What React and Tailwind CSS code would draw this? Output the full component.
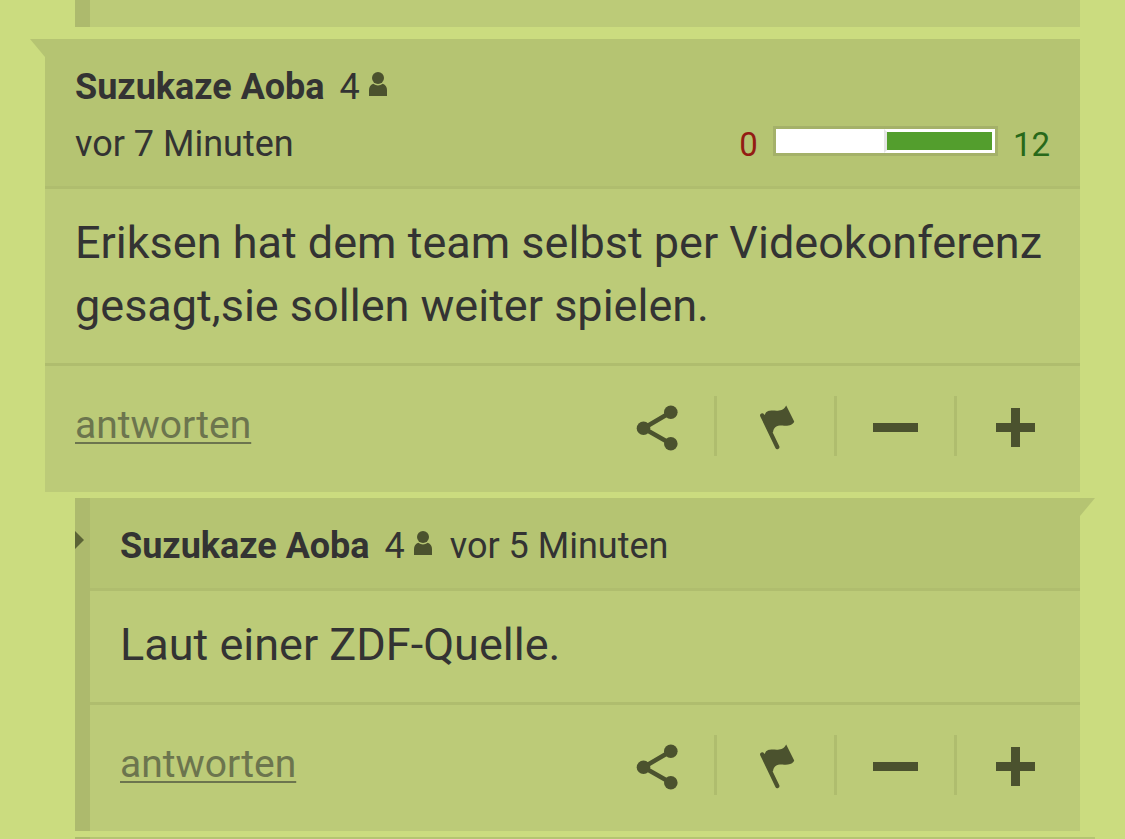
const DARK = "#4b522e";

function PersonIcon() {
  return (
    <svg viewBox="0 0 18 24" className="h-6 w-[18px]" fill={DARK} aria-hidden="true">
      <circle cx="9" cy="6" r="6" />
      <path d="M4.200 11.800Q9 15.400 13.800 11.800Q18 13.600 18 18V24H0V18Q0 13.600 4.200 11.800Z" />
    </svg>
  );
}

function ShareIcon() {
  return (
    <svg viewBox="0 0 44 46" className="h-[46px] w-11" fill={DARK} aria-hidden="true">
      <path d="M36.800 7.200L9.500 23.200L36.800 38.800" fill="none" stroke={DARK} strokeWidth="4.500" />
      <circle cx="36.800" cy="7.200" r="6.800" />
      <circle cx="9.500" cy="23.200" r="6.800" />
      <circle cx="36.800" cy="38.800" r="6.800" />
    </svg>
  );
}

function FlagIcon() {
  return (
    <svg viewBox="0 0 38 46" className="h-[46px] w-[38px]" fill={DARK} aria-hidden="true">
      <path d="M5.200 10.500L20.300 42" fill="none" stroke={DARK} strokeWidth="4.200" strokeLinecap="round" />
      <path d="M6 10.500L8 9.500C10 3.500 18 6.500 22 5.500C26 4.800 27.500 3.500 29.200 0.400L37.200 16.500C36.500 19.500 31.500 21.200 27 20.700C21 20 16.500 21.500 16 27.500L13 26Z" />
    </svg>
  );
}

function MinusIcon() {
  return (
    <svg viewBox="0 0 45 9" className="h-[9px] w-[45px]" fill={DARK} aria-hidden="true">
      <path d="M0 0H45V9H0Z" />
    </svg>
  );
}

function PlusIcon() {
  return (
    <svg viewBox="0 0 39 39" className="size-[39px]" fill={DARK} aria-hidden="true">
      <path d="M15 0H24V15H39V24H24V39H15V24H0V15H15Z" />
    </svg>
  );
}

const ACTIONS = [
  { label: "Teilen", Icon: ShareIcon },
  { label: "Melden", Icon: FlagIcon },
  { label: "Minus", Icon: MinusIcon },
  { label: "Plus", Icon: PlusIcon },
];

function Author() {
  return (
    <div className="flex items-center">
      <strong className="font-bold">Suzukaze Aoba</strong>
      <span className="ml-[15px] mr-[9px]">4</span>
      <span className="pb-2">
        <PersonIcon />
      </span>
    </div>
  );
}

function Body({ children }) {
  return (
    <p className="border-y-[3px] border-[#afbd6e] px-[30px] pt-[22px] pb-[26px] text-[45px] leading-[63px]">
      {children}
    </p>
  );
}

function Footer() {
  return (
    <footer className="flex items-start justify-between pt-[30px] pr-[6px] pb-9 pl-[30px]">
      <a
        href="#antworten"
        className="text-[39px] leading-[58px] text-[#6c754e] underline decoration-[2px] underline-offset-[4px]"
      >
        antworten
      </a>
      <div className="flex divide-x-[3px] divide-[#afbd6e]">
        {ACTIONS.map(({ label, Icon }) => (
          <button
            key={label}
            type="button"
            aria-label={label}
            className="box-content flex h-[57px] w-[117px] items-center justify-center pt-[3px]"
          >
            <Icon />
          </button>
        ))}
      </div>
    </footer>
  );
}

function Rating() {
  return (
    <div className="flex items-center gap-[15px] text-[33px]">
      <span className="text-[#931c13]">0</span>
      <div className="mb-2 flex h-[30px] w-[225px] border-[3px] border-[#a4b169] bg-white">
        <div className="w-[108px]" />
        <div className="flex-1 border-[3px] border-white border-l-[#e5e5e5] bg-[#539e2d]" />
      </div>
      <span className="text-[#28691a]">12</span>
    </div>
  );
}

export default function App() {
  return (
    <main className="h-screen overflow-hidden bg-[#cbdc7f] px-[45px] font-['Roboto',sans-serif] text-[36px] leading-[57px] text-[#333333]">
      <div className="ml-[30px] h-[27px] border-l-[15px] border-[#adba6d] bg-[#bccb78]" />

      <article className="mt-3 bg-[#bccb78]">
        <header className="relative bg-[#b5c472] px-[30px] pt-5 pb-[13px]">
          <svg viewBox="0 0 15 18" className="absolute top-0 -left-[15px] h-[18px] w-[15px]" aria-hidden="true">
            <path d="M0 0H15V18Z" fill="#b5c472" />
          </svg>
          <Author />
          <div className="flex items-center justify-between">
            <time>vor 7 Minuten</time>
            <Rating />
          </div>
        </header>
        <Body>Eriksen hat dem team selbst per Videokonferenz gesagt,sie sollen weiter spielen.</Body>
        <Footer />
      </article>

      <article className="relative mt-1.5 ml-[30px] border-l-[15px] border-[#adba6d] bg-[#bccb78]">
        <svg viewBox="0 0 9 18" className="absolute top-[33px] -left-[15px] h-[18px] w-[9px]" aria-hidden="true">
          <path d="M0 0L9 9L0 18Z" fill="#5b6336" />
        </svg>
        <header className="relative flex items-center gap-[18px] bg-[#b5c472] px-[30px] pt-5 pb-[13px]">
          <svg viewBox="0 0 15 18" className="absolute top-0 -right-[15px] h-[18px] w-[15px]" aria-hidden="true">
            <path d="M0 0H15L0 18Z" fill="#b5c472" />
          </svg>
          <Author />
          <time>vor 5 Minuten</time>
        </header>
        <Body>Laut einer ZDF-Quelle.</Body>
        <Footer />
      </article>

      <article className="mt-1.5 ml-[30px] -mr-[15px] h-6 border-l-[15px] border-[#adba6d] bg-[#b5c472]" />
    </main>
  );
}
